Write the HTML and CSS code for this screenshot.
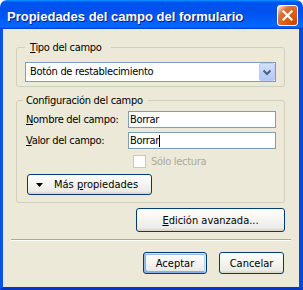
FILE: index.html
```html
<!DOCTYPE html>
<html lang="es">
<head>
<meta charset="utf-8">
<title>Propiedades del campo del formulario</title>
<link rel="stylesheet" href="styles.css">
</head>
<body>
<div class="window">
  <div class="titlebar">
    <span class="title">Propiedades del campo del formulario</span>
    <span class="close" aria-label="Cerrar">
      <svg width="19" height="19" viewBox="0 0 19 19"><path d="M5.5 5.5 L13.5 13.5 M13.5 5.5 L5.5 13.5" stroke="#fff" stroke-width="2.2" stroke-linecap="square" fill="none"/></svg>
    </span>
  </div>
  <div class="body">
    <fieldset class="group g1">
      <legend><u>T</u>ipo del campo</legend>
      <div class="combo">
        <span class="combo-text">Botón de restablecimiento</span>
        <span class="combo-btn">
          <svg width="14" height="16" viewBox="0 0 14 16"><path d="M3.5 6.5 L7 10 L10.5 6.5" stroke="#4D6185" stroke-width="2" fill="none"/></svg>
        </span>
      </div>
    </fieldset>
    <fieldset class="group g2">
      <legend>Configuración del campo</legend>
      <div class="row">
        <span class="label"><u>N</u>ombre del campo:</span>
        <span class="field">Borrar</span>
      </div>
      <div class="row">
        <span class="label"><u>V</u>alor del campo:</span>
        <span class="field">Borrar<span class="caret"></span></span>
      </div>
      <div class="check-row">
        <span class="checkbox"></span>
        <span class="check-label">Sólo lectura</span>
      </div>
      <button class="btn more">
        <svg width="7" height="4" viewBox="0 0 7 4"><path d="M0 0 H7 L3.5 4 Z" fill="#000"/></svg>
        <span class="more-text">Más <u>p</u>ropiedades</span>
      </button>
    </fieldset>
    <button class="btn adv"><u>E</u>dición avanzada...</button>
    <div class="sep"></div>
    <div class="actions">
      <button class="btn default ok">Aceptar</button>
      <button class="btn cancel">Cancelar</button>
    </div>
  </div>
</div>
</body>
</html>
```
FILE: styles.css
```css
html, body {
  margin: 0;
  padding: 0;
  background: #fff;
}

body {
  font-family: "DejaVu Sans Condensed", "DejaVu Sans", sans-serif;
  font-stretch: semi-condensed;
  font-size: 11px;
  letter-spacing: -0.3px;
  color: #000;
}

.window {
  width: 303px;
  height: 290px;
  display: flex;
  flex-direction: column;
}

.titlebar {
  height: 29px;
  flex: none;
  box-sizing: border-box;
  border-radius: 7px 7px 0 0;
  background: linear-gradient(180deg, #0997ff, #0053ee 8%, #0050ee 40%, #0066ff 88%, #0066ff 93%, #005bff 95%, #003dd7 96%, #003dd7);
  display: flex;
  align-items: flex-start;
  justify-content: space-between;
  padding: 0 5px 0 7px;
}

.title {
  margin-top: 9px;
  font-family: "Liberation Sans", Arial, sans-serif;
  font-stretch: normal;
  font-weight: bold;
  font-size: 13px;
  line-height: 15px;
  letter-spacing: 0;
  color: #fff;
  text-shadow: 1px 1px #0a1883;
  white-space: nowrap;
}

.close {
  margin-top: 5px;
  width: 21px;
  height: 21px;
  box-sizing: border-box;
  border: 1px solid #fff;
  border-radius: 3px;
  background: radial-gradient(circle at 90% 90%, #cc4600 0%, #dc6527 55%, #cd7546 70%, #ffccb2 90%, #fff 100%);
  display: flex;
  align-items: center;
  justify-content: center;
}

.close svg {
  display: block;
}

.body {
  flex: 1;
  background: #ece9d8;
  border-left: 3px solid #0554e8;
  border-right: 4px solid #0349dd;
  border-bottom: 3px solid #0336c9;
  padding: 0 14px 0 13px;
  display: flex;
  flex-direction: column;
}

.group {
  margin: 0;
  border: 1px solid #d0d0bf;
  border-radius: 3px;
  min-width: 0;
}

.group legend {
  line-height: 13px;
  white-space: nowrap;
}

.g1 {
  margin-top: 12px;
  padding: 8px 8px 4px 8px;
}

.g1 legend {
  padding: 0 9px 0 5px;
}

.g2 {
  margin-top: 7px;
  padding: 4px 8px 7px 9px;
}

.g2 legend {
  margin-left: -3px;
  padding: 0 5px 0 3px;
}

.combo {
  height: 20px;
  box-sizing: border-box;
  border: 1px solid #7f9db9;
  background: #fff;
  display: flex;
  align-items: stretch;
  justify-content: space-between;
}

.combo-text {
  padding-left: 4px;
  line-height: 18px;
}

.combo-btn {
  width: 16px;
  box-sizing: border-box;
  border: 1px solid #bccbf3;
  border-radius: 2px;
  background: linear-gradient(180deg, #d2dffd, #c1d3fb 50%, #b3c7f6);
  display: flex;
  align-items: center;
  justify-content: center;
}

.row {
  display: flex;
  align-items: center;
  height: 17px;
}

.row + .row {
  margin-top: 4px;
}

.label {
  width: 102px;
  flex: none;
  white-space: nowrap;
}

.field {
  width: 148px;
  height: 17px;
  box-sizing: border-box;
  border: 1px solid #7f9db9;
  background: #fff;
  padding-left: 1px;
  line-height: 15px;
  display: flex;
  align-items: center;
}

.caret {
  display: inline-block;
  width: 1px;
  height: 12px;
  background: #000;
  margin-left: 0;
}

.check-row {
  margin-top: 6px;
  padding-left: 107px;
  display: flex;
  align-items: center;
  height: 13px;
}

.checkbox {
  width: 13px;
  height: 13px;
  box-sizing: border-box;
  border: 1px solid #cac8bb;
  background: #fff;
  flex: none;
}

.check-label {
  margin-left: 5px;
  color: #aca899;
}

.btn {
  font: inherit;
  color: #000;
  border: 1px solid #003c74;
  border-radius: 3px;
  background: linear-gradient(180deg, #fff, #ecebe6 86%, #d6d0c5);
  padding: 0;
  margin: 0;
  box-sizing: border-box;
  display: flex;
  align-items: center;
  justify-content: center;
}

.more {
  margin-top: 6px;
  margin-left: 1px;
  width: 125px;
  height: 21px;
  justify-content: flex-start;
  padding-left: 8px;
}

.more svg {
  display: block;
  flex: none;
}

.more-text {
  margin-left: 11px;
}

.adv {
  align-self: flex-end;
  margin-top: 5px;
  width: 149px;
  height: 24px;
}

.sep {
  margin: 7px -6px 0 -5px;
  border-top: 1px solid #aca899;
  border-bottom: 1px solid #fff;
}

.actions {
  margin-top: 11px;
  padding-right: 1px;
  display: flex;
  justify-content: flex-end;
  gap: 12px;
}

.ok {
  width: 64px;
  height: 22px;
}

.cancel {
  width: 65px;
  height: 22px;
}

.default {
  box-shadow: inset -1px 1px #cee7ff, inset 1px 2px #98b8ea, inset -2px 2px #bcd4f6, inset 1px -1px #89ade4, inset 2px -2px #89ade4;
}
```
